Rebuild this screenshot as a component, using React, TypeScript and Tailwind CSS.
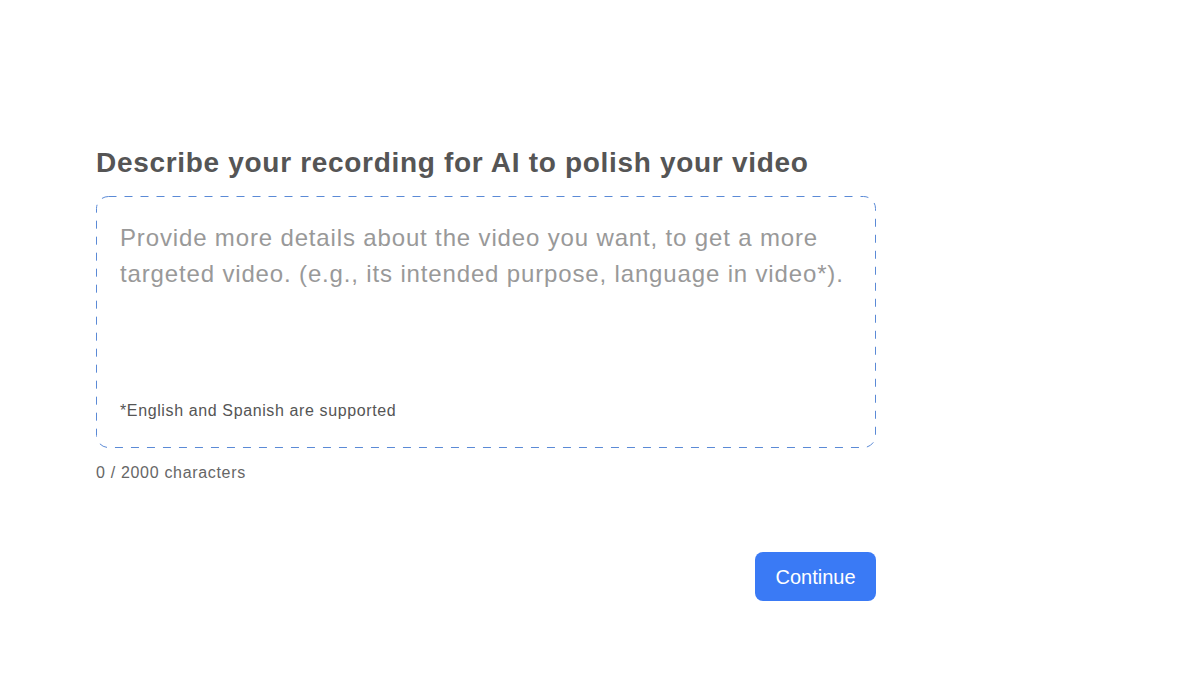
export default function App() {
  return (
    <div className="min-h-[694px] w-full bg-white font-['Liberation_Sans',Arial,sans-serif]">
      <div className="ml-[96px] w-[780px] pt-[145px]">
        <h1 className="text-[28px] font-bold leading-[36px] tracking-[0.69px] text-[#555555]">
          Describe your recording for AI to polish your video
        </h1>
        <div className="relative mt-[15px] flex h-[252px] flex-col justify-between px-6 pt-[24px] pb-[27px]">
          <svg className="pointer-events-none absolute inset-0 h-full w-full" width="780" height="252">
            <rect
              x="0.5"
              y="0.5"
              width="779"
              height="251"
              rx="12"
              ry="12"
              fill="none"
              stroke="#5b8ad6"
              strokeWidth="1"
              strokeDasharray="8 8"
            />
          </svg>
          <p className="text-[24px] leading-[36px] tracking-[0.85px] text-[#999999]">
            Provide more details about the video you want, to get a more targeted video. (e.g., its intended purpose, language in video*).
          </p>
          <p className="text-[16px] leading-[20px] tracking-[0.62px] text-[#555555]">*English and Spanish are supported</p>
        </div>
        <div className="mt-[15px] text-[16px] leading-[20px] tracking-[0.68px] text-[#666666]">0 / 2000 characters</div>
        <div className="mt-[69px] flex justify-end">
          <button className="h-[49px] w-[121px] rounded-[8px] bg-[#3a7af5] text-[20px] text-white">
            Continue
          </button>
        </div>
      </div>
    </div>
  )
}
